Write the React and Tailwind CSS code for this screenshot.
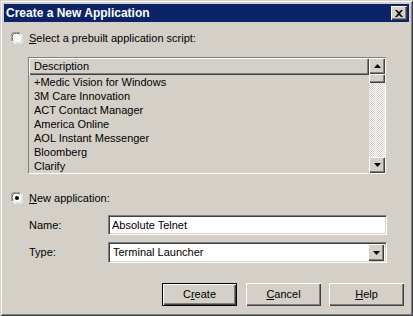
import React from 'react';

const font = { fontFamily: '"Liberation Sans", Arial, sans-serif' };

function Radio({ checked }) {
  return (
    <svg width="12" height="12" viewBox="0 0 12 12" className="shrink-0">
      <circle cx="6" cy="6" r="5.5" fill="#ffffff" />
      <path d="M1.2 9 A5.5 5.5 0 0 1 9 1.2" stroke="#808080" strokeWidth="1" fill="none" />
      <path d="M2.3 8.6 A4.4 4.4 0 0 1 8.6 2.3" stroke="#404040" strokeWidth="1" fill="none" />
      <path d="M10.8 3 A5.5 5.5 0 0 1 3 10.8" stroke="#ffffff" strokeWidth="1" fill="none" />
      <path d="M9.7 3.4 A4.4 4.4 0 0 1 3.4 9.7" stroke="#d4d0c8" strokeWidth="1" fill="none" />
      {checked && <circle cx="6" cy="6" r="2" fill="#000000" />}
    </svg>
  );
}

function Btn({ children, isDefault }) {
  return (
    <div
      className={`w-[75px] h-[23px] flex items-center justify-center text-[11px] text-black bg-[#d4d0c8] ${
        isDefault
          ? 'border border-black shadow-[inset_1px_1px_0_#ffffff,inset_-1px_-1px_0_#404040,inset_-2px_-2px_0_#808080]'
          : 'shadow-[inset_1px_1px_0_#ffffff,inset_-1px_-1px_0_#404040,inset_-2px_-2px_0_#808080]'
      }`}
    >
      {children}
    </div>
  );
}

const apps = [
  '+Medic Vision for Windows',
  '3M Care Innovation',
  'ACT Contact Manager',
  'America Online',
  'AOL Instant Messenger',
  'Bloomberg',
  'Clarify',
];

export default function App() {
  return (
    <div
      className="w-[413px] h-[316px] bg-[#d4d0c8] p-[4px] flex flex-col shadow-[inset_1px_1px_0_#d4d0c8,inset_-1px_-1px_0_#404040,inset_2px_2px_0_#ffffff,inset_-2px_-2px_0_#808080] overflow-hidden"
      style={font}
    >
      {/* Title bar */}
      <div className="h-[18px] bg-[#0a246a] flex items-center justify-between pl-[2px] pr-[2px]">
        <span className="text-white font-bold text-[12px] leading-none">Create a New Application</span>
        <div className="w-[16px] h-[14px] bg-[#d4d0c8] flex items-center justify-center shadow-[inset_1px_1px_0_#ffffff,inset_-1px_-1px_0_#404040,inset_-2px_-2px_0_#808080]">
          <svg width="8" height="7" viewBox="0 0 8 7">
            <path d="M0 0h2l2 2l2-2h2l-3 3.5l3 3.5h-2l-2-2l-2 2h-2l3-3.5z" fill="#000" />
          </svg>
        </div>
      </div>

      <div className="flex flex-col pl-[7px] text-[11px] text-black">
        {/* Radio 1 */}
        <div className="mt-[10px] h-[12px] flex items-center">
          <Radio />
          <span className="ml-[6px] leading-none">
            <span className="underline">S</span>elect a prebuilt application script:
          </span>
        </div>

        {/* Listbox */}
        <div className="mt-[13px] ml-[17px] w-[358px] h-[117px] border border-t-[#808080] border-l-[#808080] border-b-white border-r-white flex">
          <div className="flex-1 flex flex-col overflow-hidden">
            <div className="h-[17px] shrink-0 flex items-center pl-[5px] shadow-[inset_1px_1px_0_#ffffff,inset_-1px_-1px_0_#404040,inset_-2px_-2px_0_#808080]">
              Description
            </div>
            <div className="flex flex-col">
              {apps.map((a) => (
                <div key={a} className="h-[14px] leading-[14px] pl-[5px] whitespace-nowrap">
                  {a}
                </div>
              ))}
            </div>
          </div>
          <div className="w-[16px] flex flex-col">
            <div className="h-[16px] shrink-0 flex items-center justify-center shadow-[inset_1px_1px_0_#ffffff,inset_-1px_-1px_0_#404040,inset_-2px_-2px_0_#808080]">
              <svg width="7" height="4" viewBox="0 0 7 4"><path d="M3.5 0L7 4H0z" fill="#000" /></svg>
            </div>
            <div className="h-[9px] shrink-0 shadow-[inset_1px_1px_0_#ffffff,inset_-1px_-1px_0_#404040,inset_-2px_-2px_0_#808080]" />
            <div className="flex-1 bg-[repeating-conic-gradient(#ffffff_0_25%,#d4d0c8_0_50%)] bg-[length:2px_2px]" />
            <div className="h-[16px] shrink-0 flex items-center justify-center shadow-[inset_1px_1px_0_#ffffff,inset_-1px_-1px_0_#404040,inset_-2px_-2px_0_#808080]">
              <svg width="7" height="4" viewBox="0 0 7 4"><path d="M0 0H7L3.5 4z" fill="#000" /></svg>
            </div>
          </div>
        </div>

        {/* Radio 2 */}
        <div className="mt-[18px] h-[12px] flex items-center">
          <Radio checked />
          <span className="ml-[6px] leading-none">
            <span className="underline">N</span>ew application:
          </span>
        </div>

        {/* Name */}
        <div className="mt-[11px] flex items-center">
          <span className="ml-[18px] w-[79px]">Name:</span>
          <div className="w-[279px] h-[20px] bg-white flex items-center pl-[3px] border border-t-[#808080] border-l-[#808080] border-b-white border-r-white shadow-[inset_1px_1px_0_#404040,inset_-1px_-1px_0_#d4d0c8]">
            Absolute Telnet
          </div>
        </div>

        {/* Type */}
        <div className="mt-[7px] flex items-center">
          <span className="ml-[18px] w-[79px]">Type:</span>
          <div className="w-[279px] h-[21px] bg-white flex items-center justify-between pl-[4px] pr-[2px] border border-t-[#808080] border-l-[#808080] border-b-white border-r-white shadow-[inset_1px_1px_0_#404040,inset_-1px_-1px_0_#d4d0c8]">
            <span>Terminal Launcher</span>
            <div className="w-[16px] h-[17px] bg-[#d4d0c8] flex items-center justify-center shadow-[inset_1px_1px_0_#ffffff,inset_-1px_-1px_0_#404040,inset_-2px_-2px_0_#808080]">
              <svg width="7" height="4" viewBox="0 0 7 4"><path d="M0 0H7L3.5 4z" fill="#000" /></svg>
            </div>
          </div>
        </div>

        {/* Buttons */}
        <div className="mt-[20px] flex pl-[151px]">
          <Btn isDefault>
            <span>C<span className="underline">r</span>eate</span>
          </Btn>
          <div className="ml-[9px]">
            <Btn>
              <span><span className="underline">C</span>ancel</span>
            </Btn>
          </div>
          <div className="ml-[8px]">
            <Btn>
              <span><span className="underline">H</span>elp</span>
            </Btn>
          </div>
        </div>
      </div>
    </div>
  );
}
